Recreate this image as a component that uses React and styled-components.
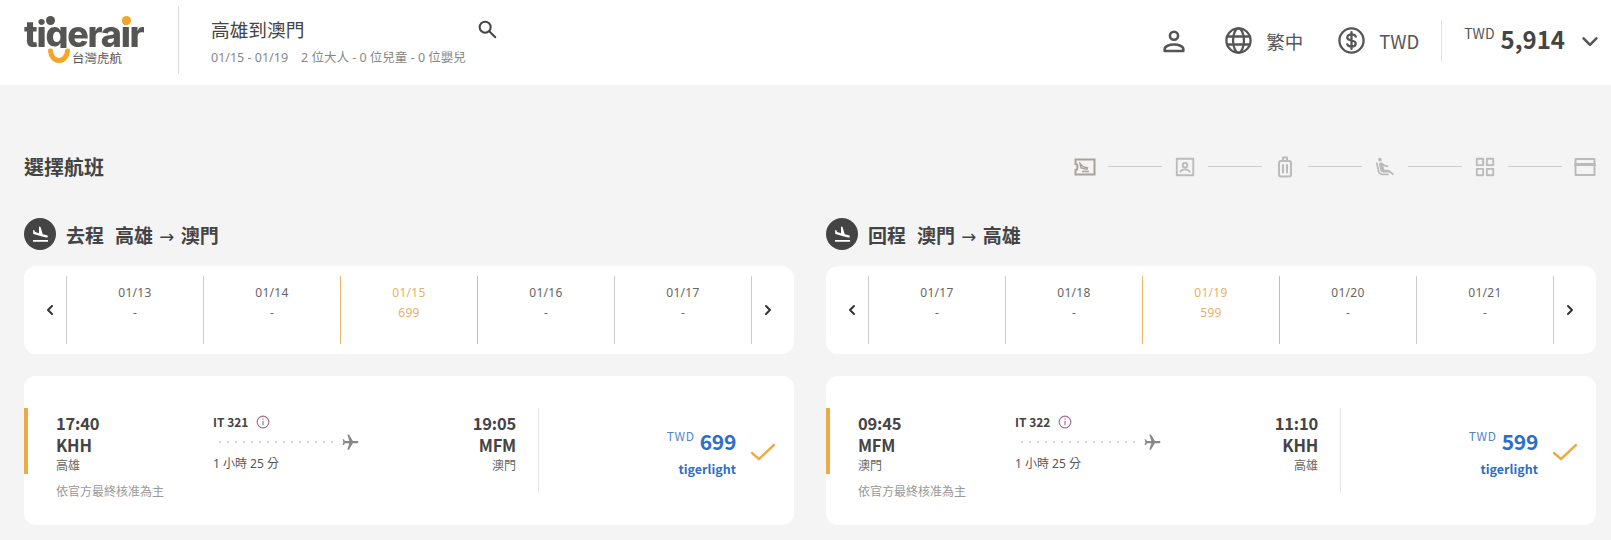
import React from 'react'
import styled, { createGlobalStyle } from 'styled-components'

const GlobalStyle = createGlobalStyle`
    html, body {
        margin: 0;
        padding: 0;
        background-color: #f4f4f4;
        color: #444;
        font-family: "Noto Sans CJK TC", "Noto Sans", sans-serif;
    }
`

const Page = styled.div`
    width: 1611px;
    height: 540px;
    overflow: hidden;
`

const Header = styled.header`
    height: 85px;
    background-color: #fff;
    display: flex;
    align-items: center;
    padding: 0 12px 0 24px;
    box-sizing: border-box;
`

const Logo = styled.div`
    position: relative;
    width: 122px;
    height: 52px;
    flex: none;
    margin-top: -6px;
`

/* the g's tail is replaced by the orange smile, so the word only paints down to its baseline */
const LogoWord = styled.div`
    font-family: "Inter", sans-serif;
    font-weight: 800;
    font-size: 36px;
    letter-spacing: -1.25px;
    line-height: 28px;
    height: 28px;
    padding-top: 6px;
    color: transparent;
    background-color: #555553;
    background-clip: text;
    -webkit-background-clip: text;
`

const LogoDot = styled.span`
    position: absolute;
    top: 2px;
    left: ${p => p.$left}px;
    width: 9px;
    height: 9px;
    border-radius: 50%;
    background-color: ${p => p.$color};
`

const LogoSmile = styled.svg`
    position: absolute;
    left: 23px;
    top: 34px;
`

const LogoCn = styled.span`
    position: absolute;
    left: 48px;
    top: 36px;
    font-size: 12.5px;
    line-height: 16px;
    color: #555;
`

const Divider = styled.div`
    width: 1px;
    height: 68px;
    background-color: #ddd;
    margin: -5px 32px 0;
    flex: none;
`

const SearchInfo = styled.div`
    width: 300px;
    flex: none;
    margin-top: -2px;
`

const SearchTitleRow = styled.div`
    display: flex;
    justify-content: space-between;
    align-items: center;
    width: 287px;
`

const SearchTitle = styled.div`
    font-size: 18.7px;
    line-height: 26px;
    color: #444;
`

const SearchSub = styled.div`
    font-family: "Noto Sans", "Noto Sans CJK TC", sans-serif;
    font-size: 12.5px;
    line-height: 18px;
    margin-top: 7px;
    color: #888;
`

const HeaderRight = styled.div`
    margin-left: auto;
    margin-top: -4px;
    display: flex;
    align-items: center;
    color: #555;
`

const HeaderItem = styled.div`
    display: flex;
    align-items: center;
    gap: 13px;
    margin-left: ${p => p.$gap}px;
    font-size: 18.5px;
`

const TotalWrap = styled.div`
    display: flex;
    align-items: center;
    height: 42px;
    margin-left: 22px;
    padding-left: 22px;
    border-left: 1px solid #e2e2e2;
`

const TotalCur = styled.span`
    font-size: 14px;
    line-height: 16px;
    align-self: flex-start;
    margin-top: 5px;
    margin-right: 6px;
`

const TotalValue = styled.span`
    font-size: 24px;
    font-weight: 700;
    color: #444;
    line-height: 42px;
    margin: -3px 16px 0 0;
`

const Main = styled.main`
    padding: 0 14px 0 24px;
`

const TitleRow = styled.div`
    display: flex;
    justify-content: space-between;
    align-items: center;
    height: 44px;
    margin-top: 61px;
`

const PageTitle = styled.h1`
    margin: -4px 0 0;
    font-size: 20px;
    font-weight: 700;
    color: #444;
`

const Stepper = styled.div`
    display: flex;
    align-items: center;
    gap: 11px;
    margin-top: -3px;
    color: #bbb;
`

const StepIcon = styled.span`
    width: 24px;
    height: 24px;
    display: flex;
    align-items: center;
    justify-content: center;
    color: ${p => p.$done ? '#a9a29a' : '#bbb'};
`

const StepLine = styled.span`
    width: 54px;
    height: 1px;
    background-color: #ccc;
`

const Columns = styled.div`
    display: grid;
    grid-template-columns: 770px 770px;
    column-gap: 32px;
    margin-top: 28px;
`

const LegHeading = styled.div`
    display: flex;
    align-items: center;
    gap: 10px;
    height: 32px;
    font-size: 19px;
    font-weight: 700;
    color: #444;
`

const LegBadge = styled.span`
    width: 32px;
    height: 32px;
    border-radius: 50%;
    background-color: #444;
    display: flex;
    align-items: center;
    justify-content: center;
`

const LegRoute = styled.span`
    margin-left: 1px;
`

const Arrow = styled.span`
    font-family: "DejaVu Sans", sans-serif;
    font-weight: 400;
    font-size: 18px;
    margin: 0 2px;
`

const DateCard = styled.div`
    height: 88px;
    margin-top: 16px;
    background-color: #fff;
    border-radius: 12px;
    display: flex;
    align-items: center;
    justify-content: center;
    box-sizing: border-box;
`

const DateArrow = styled.div`
    width: 42px;
    flex: none;
    display: flex;
    justify-content: center;
    align-items: center;
    color: #333;
    padding-left: ${p => p.$left ? 10 : 0}px;
    padding-right: ${p => p.$left ? 0 : 10}px;
    box-sizing: border-box;
`

const DateCell = styled.div`
    flex: 1;
    height: 68px;
    box-sizing: border-box;
    border-left: 1px solid ${p => p.$on ? '#e8b76c' : '#ccc'};
    border-right: ${p => p.$last ? '1px solid #ccc' : 'none'};
    text-align: center;
    font-family: "Noto Sans", sans-serif;
    font-size: 12px;
    letter-spacing: .3px;
    line-height: 20px;
    padding-top: 7px;
    color: ${p => p.$active ? '#e8b06a' : '#666'};
`

const FlightCard = styled.div`
    height: 149px;
    margin-top: 22px;
    background-color: #fff;
    border-radius: 12px;
    display: flex;
    padding-top: 32px;
    box-sizing: border-box;
`

const FlightInfo = styled.div`
    width: 515px;
    height: 85px;
    flex: none;
    border-right: 1px solid #e6e6e6;
    box-sizing: border-box;
`

const RouteRow = styled.div`
    height: 66px;
    box-sizing: border-box;
    border-left: 4px solid #eeab45;
    padding: 4px 22px 0 28px;
    display: flex;
`

const Stop = styled.div`
    width: ${p => p.$right ? 'auto' : '157px'};
    margin-left: ${p => p.$right ? 'auto' : 0};
    text-align: ${p => p.$right ? 'right' : 'left'};
`

const Time = styled.div`
    font-size: 16.5px;
    letter-spacing: -.2px;
    font-weight: 700;
    line-height: 22px;
    color: #444;
`

const City = styled.div`
    font-size: 12px;
    line-height: 18px;
    color: #666;
`

const Middle = styled.div`
    padding-top: 2px;
`

const FlightNo = styled.div`
    display: flex;
    align-items: center;
    gap: 8px;
    font-size: 12px;
    font-weight: 700;
    line-height: 16px;
    color: #444;
`

const DotsRow = styled.div`
    display: flex;
    align-items: center;
    height: 22px;
    margin-top: 1px;
    gap: 3px;
    padding-left: 3px;
`

const Dots = styled.span`
    width: 122px;
    height: 2px;
    background-image: radial-gradient(circle, #d4d4d4 1px, transparent 1.2px);
    background-size: 8px 2px;
`

const Duration = styled.div`
    font-family: "Noto Sans", "Noto Sans CJK TC", sans-serif;
    font-size: 12px;
    line-height: 18px;
    margin-top: 2px;
    color: #555;
`

const Note = styled.div`
    font-size: 12px;
    line-height: 18px;
    margin: 8px 0 0 32px;
    color: #999;
`

const FareWrap = styled.div`
    flex: 1;
    display: flex;
    justify-content: flex-end;
    align-items: center;
    gap: 14px;
    padding: 2px 18px 0 0;
    box-sizing: border-box;
    height: 85px;
`

const Fare = styled.div`
    text-align: right;
    color: #2a6fc9;
`

const FareTop = styled.div`
    display: flex;
    align-items: flex-start;
    justify-content: flex-end;
    gap: 5px;
    height: 32px;
`

const FareCur = styled.span`
    font-size: 12px;
    line-height: 16px;
    margin-top: 3px;
    letter-spacing: .7px;
    color: #5585c4;
`

const FareValue = styled.span`
    font-size: 21px;
    letter-spacing: -.3px;
    font-weight: 700;
    line-height: 32px;
`

const FareName = styled.div`
    font-size: 12.5px;
    font-weight: 700;
    line-height: 18px;
    margin-top: 3px;
`

const Chevron = ({ dir, size = 14, width = 2 }) => (
    <svg width={size} height={size} viewBox="0 0 14 14" fill="none" stroke="currentColor" strokeWidth={width} strokeLinecap="round" strokeLinejoin="round">
        {dir === 'left' && <polyline points="9,3 5,7 9,11" />}
        {dir === 'right' && <polyline points="5,3 9,7 5,11" />}
        {dir === 'down' && <polyline points="2,5 7,10 12,5" />}
    </svg>
)

const Line = ({ size = 24, width = 2, children }) => (
    <svg width={size} height={size} viewBox="0 0 24 24" fill="none" stroke="currentColor" strokeWidth={width} strokeLinecap="round" strokeLinejoin="round">{children}</svg>
)

const PLANE = 'M21 16v-2l-8-5V3.5c0-.83-.67-1.5-1.5-1.5S10 2.67 10 3.5V9l-8 5v2l8-2.5V19l-2 1.5V22l3.5-1 3.5 1v-1.5L13 19v-5.5l8 2.5z'
const LANDING = 'M2.5 19h19v2h-19v-2zm7.18-5.73l4.35 1.16 5.31 1.42c.8.21 1.62-.26 1.84-1.06.21-.8-.26-1.62-1.06-1.84l-5.31-1.42-2.76-9.02L10.12 2v8.28L5.15 8.95l-.93-2.32-1.45-.39v5.17l1.6.43 5.31 1.43z'
const SEAT = 'M5.35 5.64c-.9-.64-1.12-1.88-.49-2.79.63-.9 1.88-1.12 2.79-.49.9.64 1.12 1.88.49 2.79-.64.9-1.88 1.12-2.79.49zM16 19H8.93c-1.48 0-2.74-1.08-2.96-2.54L4 7H2l1.99 9.76C4.37 19.2 6.47 21 8.94 21H16v-2zm.23-4h-4.88l-1.03-4.1c1.58.89 3.28 1.54 5.15 1.22V9.99c-1.63.31-3.44-.27-4.69-1.25L9.14 7.47c-.23-.18-.49-.3-.76-.38-.32-.09-.66-.12-.99-.06h-.02c-1.23.22-2.05 1.39-1.84 2.61l1.35 5.92C7.16 16.98 8.39 18 9.83 18h6.85l3.82 3 1.5-1.5-5.77-4.5z'

const legs = [
    {
        label: '去程', from: '高雄', to: '澳門', dates: ['01/13', '01/14', '01/15', '01/16', '01/17'], fare: '699',
        depart: '17:40', arrive: '19:05', fromCode: 'KHH', toCode: 'MFM', no: 'IT 321',
    },
    {
        label: '回程', from: '澳門', to: '高雄', dates: ['01/17', '01/18', '01/19', '01/20', '01/21'], fare: '599',
        depart: '09:45', arrive: '11:10', fromCode: 'MFM', toCode: 'KHH', no: 'IT 322',
    },
]

const Leg = ({ leg }) => (
    <section>
        <LegHeading>
            <LegBadge>
                <svg width="19" height="19" viewBox="0 0 24 24" fill="#fff"><path d={LANDING} /></svg>
            </LegBadge>
            <span>{leg.label}</span>
            <LegRoute>{leg.from} <Arrow>→</Arrow> {leg.to}</LegRoute>
        </LegHeading>
        <DateCard>
            <DateArrow $left><Chevron dir="left" /></DateArrow>
            {leg.dates.map((d, i) => (
                <DateCell key={d} $active={i === 2} $on={i === 2 || i === 3} $last={i === 4}>
                    <div>{d}</div>
                    <div>{i === 2 ? leg.fare : '-'}</div>
                </DateCell>
            ))}
            <DateArrow><Chevron dir="right" /></DateArrow>
        </DateCard>
        <FlightCard>
            <FlightInfo>
                <RouteRow>
                    <Stop>
                        <Time>{leg.depart}</Time>
                        <Time>{leg.fromCode}</Time>
                        <City>{leg.from}</City>
                    </Stop>
                    <Middle>
                        <FlightNo>
                            {leg.no}
                            <svg width="14" height="14" viewBox="0 0 14 14" fill="none" stroke="#a5709b" strokeWidth="1.2">
                                <circle cx="7" cy="7" r="5.8" />
                                <line x1="7" y1="6" x2="7" y2="10.2" />
                                <line x1="7" y1="3.6" x2="7" y2="4.8" />
                            </svg>
                        </FlightNo>
                        <DotsRow>
                            <Dots />
                            <svg width="19" height="19" viewBox="0 0 24 24" fill="#888" style={{ transform: 'rotate(90deg)' }}>
                                <path d={PLANE} />
                            </svg>
                        </DotsRow>
                        <Duration>1 小時 25 分</Duration>
                    </Middle>
                    <Stop $right>
                        <Time>{leg.arrive}</Time>
                        <Time>{leg.toCode}</Time>
                        <City>{leg.to}</City>
                    </Stop>
                </RouteRow>
                <Note>依官方最終核准為主</Note>
            </FlightInfo>
            <FareWrap>
                <Fare>
                    <FareTop>
                        <FareCur>TWD</FareCur>
                        <FareValue>{leg.fare}</FareValue>
                    </FareTop>
                    <FareName>tigerlight</FareName>
                </Fare>
                <svg width="26" height="20" viewBox="0 0 26 20" fill="none" stroke="#eeab45" strokeWidth="2.4" strokeLinecap="round" strokeLinejoin="round">
                    <polyline points="2,11 9,17 24,3" />
                </svg>
            </FareWrap>
        </FlightCard>
    </section>
)

const App = () => (
    <Page>
        <GlobalStyle />
        <Header>
            <Logo>
                <LogoWord>tigerair</LogoWord>
                <LogoDot $left={22} $color="#555553" />
                <LogoDot $left={98} $color="#f5a623" />
                <LogoSmile width="24" height="16" viewBox="0 0 24 16" fill="none" stroke="#f5a623" strokeWidth="5" strokeLinecap="round">
                    <path d="M3.500 3c.5 6 4.500 9.500 8.500 9.500s8-3.500 8.500-9.500" />
                </LogoSmile>
                <LogoCn>台灣虎航</LogoCn>
            </Logo>
            <Divider />
            <SearchInfo>
                <SearchTitleRow>
                    <SearchTitle>高雄到澳門</SearchTitle>
                    <Line size={22} width={2.2}>
                        <circle cx="10" cy="10" r="6" />
                        <line x1="15" y1="15" x2="21" y2="21" />
                    </Line>
                </SearchTitleRow>
                <SearchSub>01/15 - 01/19 &nbsp;&nbsp; 2 位大人 - 0 位兒童 - 0 位嬰兒</SearchSub>
            </SearchInfo>
            <HeaderRight>
                <Line size={28} width={2.2}>
                    <circle cx="12" cy="7.500" r="3.500" />
                    <path d="M4 20.500v-1.500c0-2.500 4-4 8-4s8 1.500 8 4v1.500z" />
                </Line>
                <HeaderItem $gap={36}>
                    <Line size={29} width={1.9}>
                        <circle cx="12" cy="12" r="10" />
                        <ellipse cx="12" cy="12" rx="4.500" ry="10" />
                        <line x1="2.600" y1="8.700" x2="21.400" y2="8.700" />
                        <line x1="2.600" y1="15.300" x2="21.400" y2="15.300" />
                    </Line>
                    繁中
                </HeaderItem>
                <HeaderItem $gap={34}>
                    <Line size={29} width={1.9}>
                        <circle cx="12" cy="12" r="10" />
                        <path d="M15.500 8.800c-.5-1.200-1.800-1.800-3.500-1.800-2 0-3.500 1-3.500 2.500 0 3.500 7 1.500 7 5 0 1.500-1.500 2.500-3.500 2.500-1.700 0-3-.6-3.500-1.800M12 5v14" />
                    </Line>
                    TWD
                </HeaderItem>
                <TotalWrap>
                    <TotalCur>TWD</TotalCur>
                    <TotalValue>5,914</TotalValue>
                    <Chevron dir="down" size={18} />
                </TotalWrap>
            </HeaderRight>
        </Header>
        <Main>
            <TitleRow>
                <PageTitle>選擇航班</PageTitle>
                <Stepper>
                    <StepIcon $done>
                        <svg width="24" height="24" viewBox="0 0 24 24" fill="none" stroke="currentColor" strokeWidth="2">
                            <path d="M2.500 4.500h19v15h-19v-4.500c1.300 0 2-1.300 2-3s-.7-3-2-3z" />
                            <path d="M7 8.500l3 3.200 4.500 1-.5 1.800-6-1.500zM9 16.500h7" strokeWidth="1.400" />
                        </svg>
                    </StepIcon>
                    <StepLine />
                    <StepIcon>
                        <Line size={22} width={2}>
                            <rect x="3" y="3" width="18" height="18" />
                            <circle cx="12" cy="10" r="2.500" />
                            <path d="M7 17c1-2 3-2.500 5-2.500s4 .5 5 2.500" />
                        </Line>
                    </StepIcon>
                    <StepLine />
                    <StepIcon>
                        <Line size={24} width={2}>
                            <rect x="6" y="6" width="12" height="15.500" rx="2" />
                            <path d="M10 6V2.500h4V6M10 10v7.500M14 10v7.500" />
                        </Line>
                    </StepIcon>
                    <StepLine />
                    <StepIcon>
                        <svg width="22" height="22" viewBox="0 0 24 24" fill="currentColor"><path d={SEAT} /></svg>
                    </StepIcon>
                    <StepLine />
                    <StepIcon>
                        <Line size={22} width={2}>
                            <rect x="3" y="3" width="7" height="7" />
                            <rect x="14" y="3" width="7" height="7" />
                            <rect x="3" y="14" width="7" height="7" />
                            <rect x="14" y="14" width="7" height="7" />
                        </Line>
                    </StepIcon>
                    <StepLine />
                    <StepIcon>
                        <Line size={24} width={2}>
                            <rect x="2.500" y="4" width="19" height="16" />
                            <path d="M2.500 9.500h19" strokeWidth="3" />
                        </Line>
                    </StepIcon>
                </Stepper>
            </TitleRow>
            <Columns>
                {legs.map(leg => <Leg key={leg.label} leg={leg} />)}
            </Columns>
        </Main>
    </Page>
)

export default App
